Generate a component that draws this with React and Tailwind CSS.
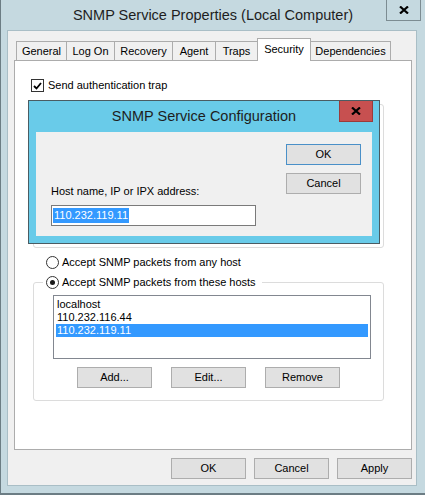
import React from 'react';

const tabs = [
  { label: 'General', w: 'w-[51px]' },
  { label: 'Log On', w: 'w-[49px]' },
  { label: 'Recovery', w: 'w-[59px]' },
  { label: 'Agent', w: 'w-[44px]' },
  { label: 'Traps', w: 'w-[43px]' },
  { label: 'Security', w: 'w-[54px]', active: true },
  { label: 'Dependencies', w: 'w-[81px]' },
];

const hosts = ['localhost', '110.232.116.44', '110.232.119.11'];

function Btn({ children, primary }) {
  return (
    <button
      className={`flex h-[21px] w-[75px] items-center justify-center border bg-[#e1e1e1] text-[11px] leading-none text-black ${
        primary ? 'border-[#4a90c8]' : 'border-[#adadad]'
      }`}
    >
      {children}
    </button>
  );
}

function Radio({ checked }) {
  return (
    <span className="flex h-[13px] w-[13px] shrink-0 items-center justify-center rounded-full border border-[#333] bg-white">
      {checked && <span className="h-[5px] w-[5px] rounded-full bg-[#1a1a1a]" />}
    </span>
  );
}

function XGlyph() {
  return (
    <svg width="10" height="8" viewBox="0 0 10 8">
      <path d="M1 0.5 L9 7.5 M9 0.5 L1 7.5" stroke="#000" strokeWidth="2.2" />
    </svg>
  );
}

export default function App() {
  return (
    <div className="relative flex h-[495px] w-[425px] flex-col border-b-2 border-l border-[#6c7d84] bg-[#c5d9e0] font-['Liberation_Sans',Arial,sans-serif] text-[11px] text-black">
      {/* caption */}
      <div className="grid h-[30px] shrink-0 grid-cols-[1fr_auto_1fr]">
        <div />
        <div className="self-center pt-[2px] text-[14.5px] text-[#1e1e1e]">
          SNMP Service Properties (Local Computer)
        </div>
        <button className="mr-[4px] flex h-[21px] w-[35px] items-center justify-center self-start justify-self-end border border-t-0 border-[#7c8c92]">
          <XGlyph />
        </button>
      </div>

      {/* window body */}
      <div className="ml-[6px] h-[456px] w-[410px] border border-[#a9bec6] bg-[#f0f0f0] pt-[7px]">
        <div className="ml-[6px] w-[398px]">
          <div className="flex h-[22px] items-end pl-[2px]">
            {tabs.map((t, i) =>
              t.active ? (
                <div
                  key={t.label}
                  className={`relative z-10 -mb-px flex h-[23px] items-center justify-center border border-b-0 border-[#acacac] bg-white pb-[2px] ${t.w} ${i ? '-ml-px' : ''}`}
                >
                  {t.label}
                </div>
              ) : (
                <div
                  key={t.label}
                  className={`flex h-[19px] items-center justify-center border border-b-0 border-[#acacac] bg-[#f0f0f0] ${t.w} ${i ? '-ml-px' : ''}`}
                >
                  {t.label}
                </div>
              )
            )}
          </div>

          {/* Security page */}
          <div className="h-[390px] border border-[#acacac] bg-white">
            <div className="ml-[16px] mt-[18px] flex h-[13px] items-center gap-[4px]">
              <span className="flex h-[13px] w-[13px] items-center justify-center border border-[#333] bg-white">
                <svg width="9" height="8" viewBox="0 0 9 8">
                  <path d="M1 4 L3.5 6.5 L8 1" stroke="#000" strokeWidth="1.8" fill="none" />
                </svg>
              </span>
              <span>Send authentication trap</span>
            </div>

            {/* community names group (under the popup) */}
            <div className="ml-[18px] mt-[12px] h-[144px] w-[351px] rounded-[3px] border border-[#dcdcdc]" />

            <div className="ml-[31px] mt-[8px] flex h-[13px] items-center gap-[3px]">
              <Radio />
              <span>Accept SNMP packets from any host</span>
            </div>

            <fieldset className="ml-[18px] mt-[7px] w-[351px] rounded-[3px] border border-[#dcdcdc] pb-[12px]">
              <legend className="ml-[9px] flex h-[13px] items-center gap-[3px] pl-[3px] pr-[6px]">
                <Radio checked />
                <span>Accept SNMP packets from these hosts</span>
              </legend>
              <div className="ml-[19px] mt-[6px] h-[64px] w-[318px] border border-[#828790] bg-white px-[2px] pt-[2px]">
                {hosts.map((h, i) => (
                  <div
                    key={h}
                    className={`h-[13px] pl-[1px] leading-[13px] ${i === 2 ? 'bg-[#3399ff] text-white' : ''}`}
                  >
                    {h}
                  </div>
                ))}
              </div>
              <div className="mt-[8px] flex justify-center gap-[19px]">
                <Btn>Add...</Btn>
                <Btn>Edit...</Btn>
                <Btn>Remove</Btn>
              </div>
            </fieldset>
          </div>

          <div className="mt-[8px] flex justify-end gap-[8px]">
            <Btn>OK</Btn>
            <Btn>Cancel</Btn>
            <Btn>Apply</Btn>
          </div>
        </div>
      </div>

      {/* popup dialog */}
      <div className="absolute left-[27px] top-[100px] flex h-[144px] w-[352px] flex-col border border-[#4a5c63] bg-[#69cbe9] px-[7px] pb-[7px]">
        <div className="grid h-[31px] shrink-0 grid-cols-[1fr_auto_1fr]">
          <div />
          <div className="self-center text-[14.5px] text-[#1e1e1e]">SNMP Service Configuration</div>
          <button className="-mr-px flex h-[21px] w-[34px] items-center justify-center self-start justify-self-end border border-t-0 border-[#9b3b3b] bg-[#c75050]">
            <XGlyph />
          </button>
        </div>
        <div className="flex flex-1 bg-[#f0f0f0]">
          <div className="flex flex-1 flex-col justify-end pb-[10px] pl-[15px]">
            <div className="h-[13px] leading-[13px]">Host name, IP or IPX address:</div>
            <div className="mt-[7px] flex h-[21px] w-[205px] items-center border border-[#7a7a7a] bg-white pl-[1px]">
              <span className="h-[15px] bg-[#3399ff] px-[1px] leading-[15px] text-white">110.232.119.11</span>
            </div>
          </div>
          <div className="flex flex-col gap-[8px] pr-[11px] pt-[12px]">
            <Btn primary>OK</Btn>
            <Btn>Cancel</Btn>
          </div>
        </div>
      </div>
    </div>
  );
}
